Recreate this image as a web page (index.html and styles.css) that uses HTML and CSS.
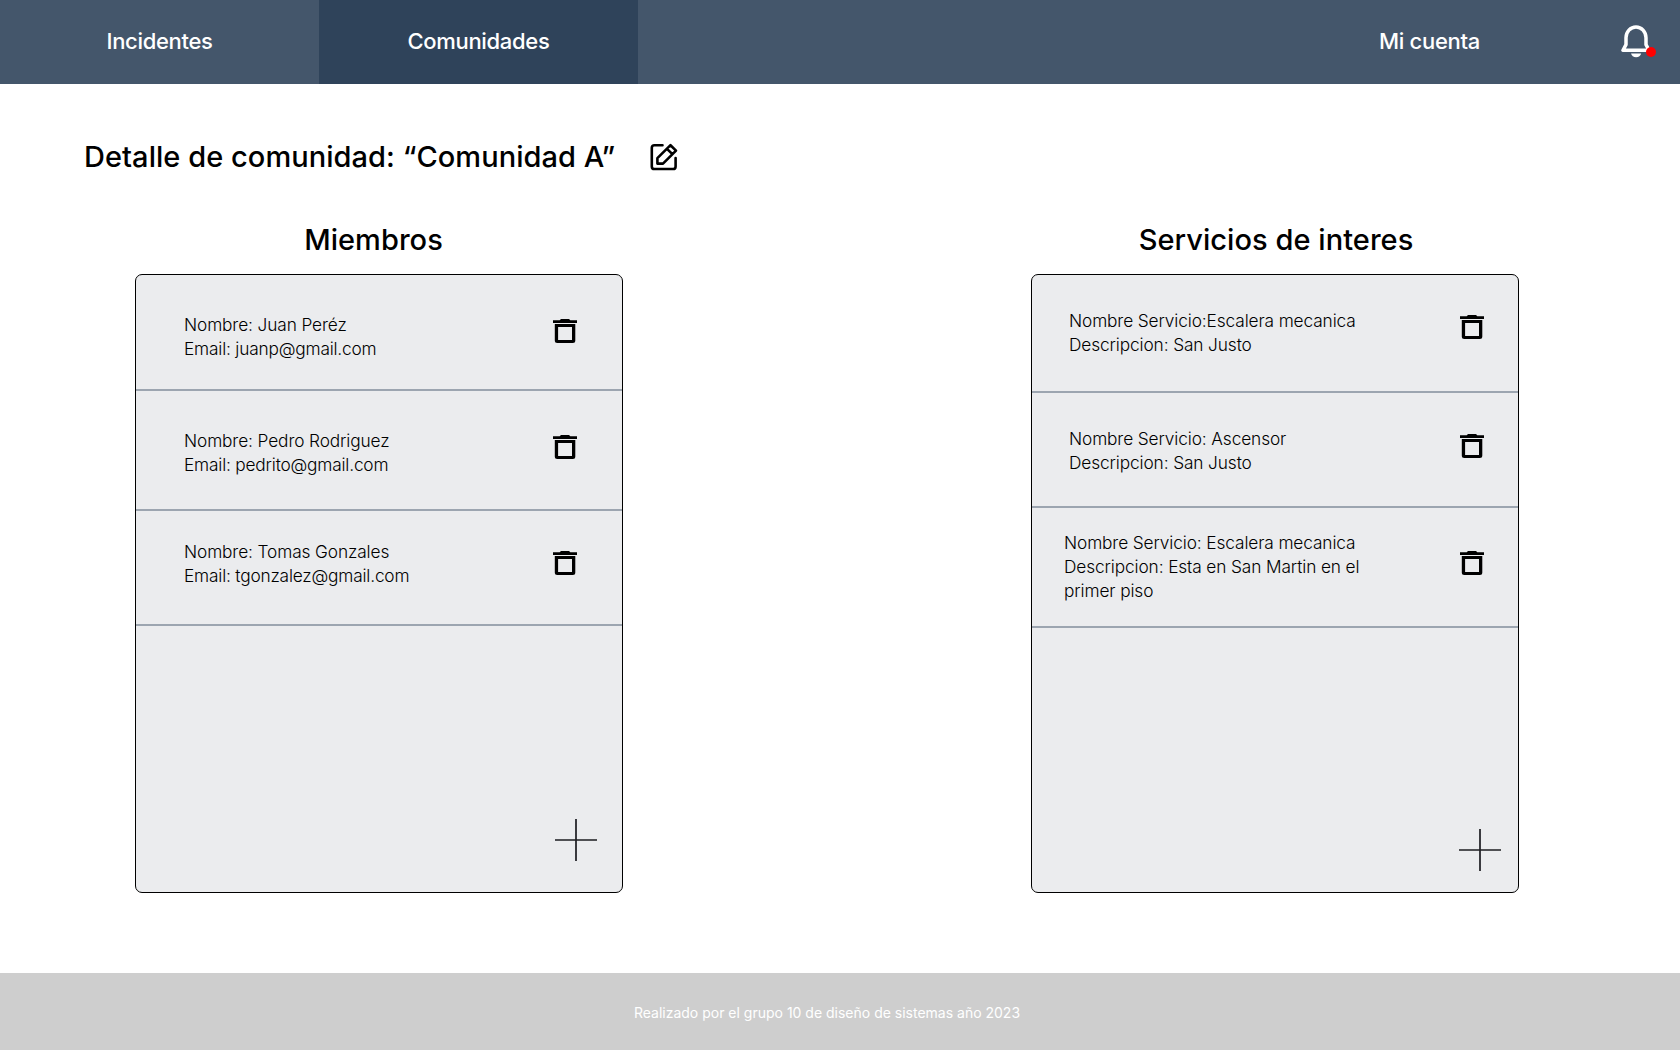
FILE: index.html
```html
<!DOCTYPE html>
<html lang="es">
<head>
<meta charset="utf-8">
<title>Detalle de comunidad</title>
<link rel="stylesheet" href="styles.css">
</head>
<body>
<svg class="sprite" aria-hidden="true">
  <symbol id="trash" viewBox="0 0 24 24">
    <path d="M0 1.2H6.7L8 0H16L17.3 1.2H24V4H0Z"/>
    <path fill-rule="evenodd" d="M1.8 5H22.3V21.5Q22.3 24 19.8 24H4.3Q1.8 24 1.8 21.5ZM5.1 8V21H19V8Z"/>
  </symbol>
  <symbol id="plus" viewBox="0 0 42 42">
    <path d="M0 21H42M21 0V42" fill="none" stroke="#1c1c20" stroke-width="1.7"/>
  </symbol>
</svg>

<header class="nav">
  <a class="tab">Incidentes</a>
  <a class="tab tab-active">Comunidades</a>
  <a class="tab tab-account">Mi cuenta</a>
  <div class="bell">
    <svg width="30" height="33" viewBox="0 0 30 33">
      <path d="M2 25.3H28L25 19.6V12.8A10 10.9 0 0 0 5 12.8V19.6Z" fill="none" stroke="#fff" stroke-width="3.5" stroke-linejoin="round"/>
      <path d="M10 28.6H20.2Q19.2 32.2 15.1 32.2T10 28.6Z" fill="#fff"/>
    </svg>
    <span class="dot"></span>
  </div>
</header>

<main>
  <div class="title-row">
    <h1>Detalle de comunidad: “Comunidad A”</h1>
    <svg class="edit" width="28" height="28" viewBox="0 0 28 28" fill="none" stroke="#000" stroke-width="2.6" stroke-linejoin="round" stroke-linecap="round">
      <path d="M12.5 2.2H4.4Q1.8 2.2 1.8 4.8V23.4Q1.8 26 4.4 26H23Q25.6 26 25.6 23.4V15"/>
      <path d="M7.4 20.6V15.2L20.5 2.2L26 7.6L13 20.6ZM17 5.8L22.4 11.2"/>
    </svg>
  </div>

  <div class="columns">
    <section>
      <h2 class="members-title">Miembros</h2>
      <div class="panel members">
        <article class="row m1">
          <p>Nombre: Juan Peréz<br><span class="email">Email: juanp@gmail.com</span></p>
          <svg class="trash"><use href="#trash"/></svg>
        </article>
        <article class="row m2">
          <p>Nombre: Pedro Rodriguez<br><span class="email">Email: pedrito@gmail.com</span></p>
          <svg class="trash"><use href="#trash"/></svg>
        </article>
        <article class="row m3">
          <p>Nombre: Tomas Gonzales<br><span class="email">Email: tgonzalez@gmail.com</span></p>
          <svg class="trash"><use href="#trash"/></svg>
        </article>
        <div class="add"><svg class="plus"><use href="#plus"/></svg></div>
      </div>
    </section>

    <section>
      <h2 class="services-title">Servicios de interes</h2>
      <div class="panel services">
        <article class="row s1">
          <p>Nombre Servicio:Escalera mecanica<br>Descripcion: San Justo</p>
          <svg class="trash"><use href="#trash"/></svg>
        </article>
        <article class="row s2">
          <p>Nombre Servicio: Ascensor<br>Descripcion: San Justo</p>
          <svg class="trash"><use href="#trash"/></svg>
        </article>
        <article class="row s3">
          <p>Nombre Servicio: Escalera mecanica<br>Descripcion: Esta en San Martin en el<br>primer piso</p>
          <svg class="trash"><use href="#trash"/></svg>
        </article>
        <div class="add"><svg class="plus"><use href="#plus"/></svg></div>
      </div>
    </section>
  </div>
</main>

<footer>Realizado por el grupo 10 de diseño de sistemas año 2023</footer>
</body>
</html>
```
FILE: styles.css
```css
* { box-sizing: border-box; }

body {
  margin: 0;
  min-height: 1050px;
  display: flex;
  flex-direction: column;
  background: #fff;
  color: #000;
  font-family: Inter, "Liberation Sans", sans-serif;
}

h1, h2, p { margin: 0; }

.sprite { display: none; }

.nav {
  display: flex;
  height: 84px;
  background: #44566b;
  color: #fff;
}

.tab {
  display: flex;
  align-items: center;
  justify-content: center;
  width: 319px;
  padding-bottom: 2px;
  font-size: 22px;
  font-weight: 450;
  letter-spacing: -0.32px;
  white-space: nowrap;
}
.tab-active { background: #2f435a; }
.tab-account { margin-left: 632px; }

.bell {
  position: relative;
  width: 30px;
  height: 33px;
  margin: 25px 0 0 32px;
}
.bell svg { display: block; }
.dot {
  position: absolute;
  left: 25px;
  top: 22px;
  width: 10px;
  height: 10px;
  border-radius: 50%;
  background: #f00;
}

main { flex: 1; }

.title-row {
  display: flex;
  align-items: center;
  gap: 35px;
  padding: 53px 0 0 84px;
  height: 93px;
}
h1, h2 {
  font-weight: 500;
  font-size: 29px;
  line-height: 40px;
  letter-spacing: 0.05px;
  white-space: nowrap;
}
h1 { width: 531px; }
.edit { flex: none; }

.columns {
  display: flex;
  gap: 408px;
  padding: 43px 0 0 135px;
}
section { width: 488px; }
h2 {
  margin-bottom: 14px;
  text-align: center;
}
.members-title { padding-right: 11px; }
.services-title { padding-left: 2px; }

.panel {
  display: flex;
  flex-direction: column;
  height: 619px;
  border: 1px solid #000;
  border-radius: 7px;
  background: #ebecee;
}

.row {
  display: flex;
  justify-content: space-between;
  align-items: flex-start;
  height: var(--height);
  padding: 0 var(--right) 0 var(--left);
  border-bottom: 2px solid #9ca5b0;
  font-size: 17.3px;
  font-weight: 330;
  line-height: 24px;
  letter-spacing: -0.12px;
  white-space: nowrap;
}
.row p { margin-top: var(--text-top); }
.email { letter-spacing: -0.19px; }
.trash {
  flex: none;
  width: 24px;
  height: 24px;
  margin-top: var(--icon-top);
}

.members { --left: 48px; --right: 45px; }
.services { --left: 37px; --right: 34px; }
.m1 { --height: 116px; --text-top: 38px; --icon-top: 44px; }
.m2 { --height: 120px; --text-top: 38px; --icon-top: 44px; }
.m3 { --height: 115px; --text-top: 29px; --icon-top: 40px; }
.s1 { --height: 118px; --text-top: 34px; --icon-top: 40px; }
.s2 { --height: 115px; --text-top: 34px; --icon-top: 41px; }
.s3 { --height: 120px; --text-top: 23px; --icon-top: 43px; --left: 32px; }

.add {
  display: flex;
  flex: 1;
  justify-content: flex-end;
  align-items: flex-end;
  padding: 0 25px 31px 0;
}
.services .add { padding: 0 17px 21px 0; }
.plus { width: 42px; height: 42px; }

footer {
  height: 77px;
  padding-right: 26px;
  background: #cecece;
  color: #fff;
  font-size: 14px;
  line-height: 80px;
  text-align: center;
}
```
